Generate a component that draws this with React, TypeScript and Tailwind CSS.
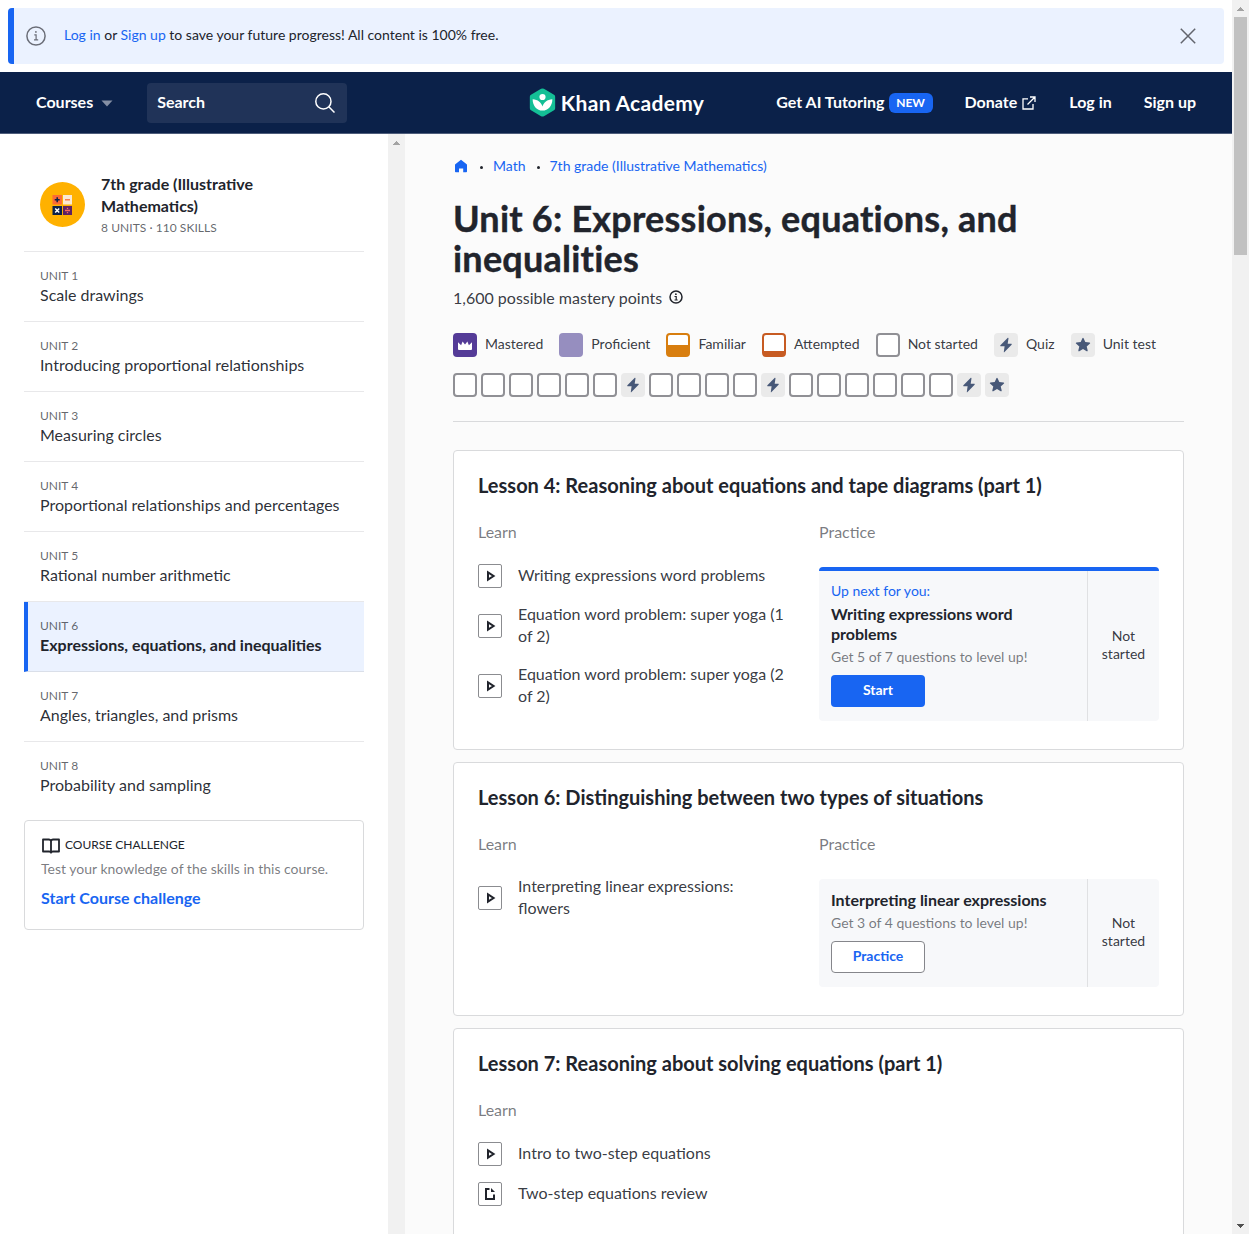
import React from "react";

const units = [
  "Scale drawings",
  "Introducing proportional relationships",
  "Measuring circles",
  "Proportional relationships and percentages",
  "Rational number arithmetic",
  "Expressions, equations, and inequalities",
  "Angles, triangles, and prisms",
  "Probability and sampling",
];

type Level = "mastered" | "proficient" | "familiar" | "attempted" | "none" | "quiz" | "test";

const legend: [Level, string][] = [
  ["mastered", "Mastered"],
  ["proficient", "Proficient"],
  ["familiar", "Familiar"],
  ["attempted", "Attempted"],
  ["none", "Not started"],
  ["quiz", "Quiz"],
  ["test", "Unit test"],
];

const progress: Level[] = [
  ...Array<Level>(6).fill("none"),
  "quiz",
  ...Array<Level>(4).fill("none"),
  "quiz",
  ...Array<Level>(6).fill("none"),
  "quiz",
  "test",
];

function Cell({ level }: { level: Level }) {
  switch (level) {
    case "mastered":
      return (
        <span className="flex size-6 items-center justify-center rounded bg-[#543b97]">
          <svg width="14" height="9" viewBox="0 0 14 9" fill="#fff">
            <path d="M0 1.2 3.1 4.2 4.6.4 7 3.6 9.4.4l1.5 3.8L14 1.2V8a.9.9 0 0 1-.9.9H.9A.9.9 0 0 1 0 8z" />
          </svg>
        </span>
      );
    case "proficient":
      return <span className="size-6 rounded bg-[#968ebf]" />;
    case "familiar":
      return <span className="size-6 rounded border-2 border-b-12 border-[#d87e0f] bg-white" />;
    case "attempted":
      return <span className="size-6 rounded border-2 border-b-6 border-[#c75b22] bg-white" />;
    case "none":
      return <span className="size-6 rounded border-2 border-[#909095] bg-white" />;
    case "quiz":
      return (
        <span className="flex size-6 items-center justify-center rounded bg-[#eaeaea]">
          <svg width="24" height="24" viewBox="0 0 24 24" fill="#475878">
            <path d="M13.8 4.8 6.4 12.3c-.3.4-.1 1 .4 1h3.8l-.8 5.6c0 .4.4.5.7.2l7.1-7.4c.3-.4.1-1-.4-1h-3.5l.8-5.5c0-.5-.4-.7-.7-.4z" />
          </svg>
        </span>
      );
    case "test":
      return (
        <span className="flex size-6 items-center justify-center rounded bg-[#eaeaea]">
          <svg width="24" height="24" viewBox="0 0 24 24" fill="#475878">
            <path d="M11.4 5.2a.65.65 0 0 1 1.2 0l1.7 3.9 4.3.4c.6.1.8.8.4 1.1l-3.3 2.8 1 4.2c.1.6-.5 1-1 .7L12 16.1l-3.7 2.2c-.5.3-1.1-.1-1-.7l1-4.2L5 10.6c-.4-.3-.2-1 .4-1.1l4.3-.4z" />
          </svg>
        </span>
      );
  }
}

type Practice = { upNext?: boolean; title: string; note: string; action: string };

const lessons: { title: string; learn: ["video" | "article", string][]; practice?: Practice }[] = [
  {
    title: "Lesson 4: Reasoning about equations and tape diagrams (part 1)",
    learn: [
      ["video", "Writing expressions word problems"],
      ["video", "Equation word problem: super yoga (1 of 2)"],
      ["video", "Equation word problem: super yoga (2 of 2)"],
    ],
    practice: {
      upNext: true,
      title: "Writing expressions word problems",
      note: "Get 5 of 7 questions to level up!",
      action: "Start",
    },
  },
  {
    title: "Lesson 6: Distinguishing between two types of situations",
    learn: [["video", "Interpreting linear expressions: flowers"]],
    practice: {
      title: "Interpreting linear expressions",
      note: "Get 3 of 4 questions to level up!",
      action: "Practice",
    },
  },
  {
    title: "Lesson 7: Reasoning about solving equations (part 1)",
    learn: [
      ["video", "Intro to two-step equations"],
      ["article", "Two-step equations review"],
    ],
  },
];

function ContentIcon({ kind }: { kind: "video" | "article" }) {
  return (
    <span className="flex size-6 shrink-0 items-center justify-center rounded-xs border border-[#8b8c90]">
      <svg width="22" height="22" viewBox="0 0 22 22" fill="none" stroke="#21242c" strokeWidth="2">
        {kind === "video" ? (
          <path d="M9 7.3v7.4L14.6 11z" />
        ) : (
          <>
            <path d="M10.5 6H7v10h8v-4.5" />
            <path d="M12 5l4 4h-4z" fill="#21242c" stroke="none" />
          </>
        )}
      </svg>
    </span>
  );
}

function PracticeCard({ practice }: { practice: Practice }) {
  return (
    <div
      className={
        practice.upNext
          ? "mt-[25px] flex overflow-hidden rounded border-t-4 border-[#1865f2] bg-[#f7f8fa]"
          : "mt-[25px] flex overflow-hidden rounded bg-[#f7f8fa]"
      }
    >
      <div className="flex-1 pt-[11px] pb-3.5 pl-3">
        {practice.upNext && <div className="mb-1 text-sm leading-[18px] text-[#1865f2]">Up next for you:</div>}
        <div className="w-[232px] leading-5 font-bold">{practice.title}</div>
        <div className="mt-1 text-sm leading-[18px] text-[#21242c]/60">{practice.note}</div>
        <button
          className={
            practice.upNext
              ? "mt-[9px] block h-8 w-[94px] rounded bg-[#1865f2] pb-0.5 text-sm font-bold text-white"
              : "mt-[9px] block h-8 w-[94px] rounded border border-[#85868b] bg-white pb-0.5 text-sm font-bold text-[#1865f2]"
          }
        >
          {practice.action}
        </button>
      </div>
      <div className="flex w-[72px] items-center justify-center border-l border-[#e0e1e3] pb-0.5 text-center text-sm leading-[18px] text-[#21242c]/90">
        Not
        <br />
        started
      </div>
    </div>
  );
}

function Arrow({ down, dark }: { down?: boolean; dark?: boolean }) {
  return (
    <svg width="17" height="17" viewBox="0 0 17 17" fill={dark ? "#505050" : "#a3a3a3"} shapeRendering="crispEdges">
      <path d={down ? "M5 7h7l-3.5 4z" : "M5 11h7L8.5 7z"} />
    </svg>
  );
}

function Logo() {
  return (
    <div className="flex items-center pl-px">
      <svg width="27" height="29" viewBox="0 0 27 30">
        <path
          d="M1.6 6.9 12 .9a3 3 0 0 1 3 0l10.4 6a2.4 2.4 0 0 1 1.2 2.1v12a2.4 2.4 0 0 1-1.2 2.1l-10.4 6a3 3 0 0 1-3 0l-10.4-6A2.4 2.4 0 0 1 .4 21V9a2.4 2.4 0 0 1 1.2-2.1z"
          fill="#14bf96"
        />
        <circle cx="13.5" cy="9.3" r="3.2" fill="#fff" />
        <path
          d="M3.3 11.6c5.4.3 8.9 3.3 10.2 7.6 1.3-4.3 4.8-7.3 10.2-7.6 0 6.900-4.300 11.800-10.200 11.800S3.300 18.500 3.300 11.600z"
          fill="#fff"
        />
      </svg>
      <span className="ml-[5px] text-[21px] leading-[30px] font-bold tracking-[0.3px]">Khan Academy</span>
    </div>
  );
}

export default function App() {
  return (
    <div className="flex h-[1234px] w-[1249px] overflow-hidden bg-white font-['Lato',sans-serif] text-base text-[#21242c]">
      <div className="flex w-[1232px] flex-col">
        <div className="m-2 flex h-14 shrink-0 items-center overflow-hidden rounded border-l-6 border-[#1865f2] bg-[#ebf2ff] pr-[26px] pl-3">
          <svg width="20" height="20" viewBox="0 0 20 20" fill="none" stroke="#6b6e78" strokeWidth="1.5">
            <circle cx="10" cy="10" r="9.1" />
            <path d="M8.3 8.8h1.8v5M8 13.9h4.2" strokeWidth="1.2" />
            <circle cx="9.9" cy="5.9" r=".9" fill="#6b6e78" stroke="none" />
          </svg>
          <p className="ml-[18px] pb-0.5 text-sm">
            <a className="text-[#1865f2]">Log in</a> or <a className="text-[#1865f2]">Sign up</a> to save your future
            progress! All content is 100% free.
          </p>
          <svg className="ml-auto" width="20" height="20" viewBox="0 0 20 20" stroke="#62656d" strokeWidth="1.5">
            <path d="M2.8 2.8l14.4 14.4M17.2 2.8 2.8 17.2" />
          </svg>
        </div>

        <header className="flex h-[62px] shrink-0 items-center border-b border-[#4e5d7b] bg-[#0b2149] px-9 font-bold text-white">
          <div className="flex flex-1 items-center">
            <span className="pb-0.5">Courses</span>
            <svg className="mt-0.5 ml-2" width="12" height="7" viewBox="0 0 12 7" fill="#858fa4">
              <path d="M.5.5h11L6 6.5z" />
            </svg>
            <div className="ml-[34px] flex h-10 w-[200px] items-center justify-between rounded bg-[#203358] pr-3 pl-2.5">
              <span className="pb-0.5">Search</span>
              <svg width="20" height="20" viewBox="0 0 20 20" fill="none" stroke="#fff" strokeWidth="1.5">
                <circle cx="8.4" cy="8.4" r="7.6" />
                <path d="M13.8 13.8l5.7 5.7" />
              </svg>
            </div>
          </div>
          <Logo />
          <nav className="flex flex-1 items-center justify-end gap-8">
            <span className="flex items-center">
              <span className="pb-0.5">Get AI Tutoring</span>
              <span className="ml-1 h-5 w-11 rounded-md bg-[#1865f2] text-center text-xs leading-5">NEW</span>
            </span>
            <span className="flex items-center">
              <span className="pb-0.5">Donate</span>
              <svg className="mr-px ml-[5px]" width="14" height="14" viewBox="0 0 14 14" fill="none" stroke="#fff" strokeWidth="1.3">
                <path d="M6 2.9H1v10.1h10V8M8 1h5v5M13 1 5.5 8.5" />
              </svg>
            </span>
            <span className="pb-0.5">Log in</span>
            <span className="pb-0.5">Sign up</span>
          </nav>
        </header>

        <div className="flex min-h-0 flex-1">
          <aside className="w-[388px] shrink-0 px-6">
            <div className="flex h-[118px] border-b border-[#e8e8ea] pt-[39px] pl-4">
              <svg className="mt-[9px]" width="45" height="45" viewBox="0 0 45 45">
                <circle cx="22.5" cy="22.5" r="22.5" fill="#ffb100" />
                <rect x="12.5" y="13" width="9.5" height="9.5" fill="#fb6b35" />
                <rect x="23" y="13" width="9" height="9.5" fill="#fbe8d3" />
                <rect x="12.5" y="24" width="9.5" height="9" fill="#0b2149" />
                <rect x="23" y="24" width="9" height="9" fill="#5d2163" />
                <path d="M17.2 15.3v5M14.7 17.8h5" stroke="#0b2149" strokeWidth="1.5" />
                <path d="M25 17.8h5" stroke="#fb6b35" strokeWidth="1.3" />
                <path d="M15.2 26.5l4 4M19.2 26.5l-4 4" stroke="#fff" strokeWidth="1.5" />
                <path d="M25 28.5h5M27.5 25.7v1.4M27.5 29.9v1.4" stroke="#fb6b60" strokeWidth="1.3" />
              </svg>
              <div className="ml-4 w-[200px]">
                <div className="leading-[22px] font-bold">7th grade (Illustrative Mathematics)</div>
                <div className="mt-[3px] text-xs leading-4 tracking-[0.05px] text-[#21242c]/70">
                  8 UNITS · 110 SKILLS
                </div>
              </div>
            </div>
            {units.map((name, i) => (
              <div
                key={name}
                className={
                  i === 5
                    ? "h-[70px] border-b border-l-4 border-b-[#dadfe9] border-l-[#1865f2] bg-[#ebf2ff] pt-4 pl-3"
                    : i === 7
                      ? "h-[78px] pt-4 pl-4"
                      : "h-[70px] border-b border-[#e8e8ea] pt-4 pl-4"
                }
              >
                <div className="text-xs leading-4 text-[#21242c]/70">UNIT {i + 1}</div>
                <div className={i === 5 ? "leading-[22px] font-bold" : "leading-[22px] text-[#21242c]/95"}>{name}</div>
              </div>
            ))}
            <div className="h-[110px] rounded border border-[#d9dadc] px-4 pt-[15px]">
              <div className="flex items-center text-xs leading-4">
                <svg
                  className="mt-0.5 mr-1"
                  width="20"
                  height="16"
                  viewBox="0 0 20 16"
                  fill="none"
                  stroke="#21242c"
                  strokeWidth="1.8"
                  strokeLinejoin="round"
                  strokeLinecap="round"
                >
                  <path d="M10 3.2C10 2.2 9 1.5 7.8 1.5H2V13.5h6c1.2 0 2 .4 2 1.2 0-.8.8-1.2 2-1.2h6V1.5h-5.8C11 1.5 10 2.2 10 3.2zV14.5" />
                </svg>
                COURSE CHALLENGE
              </div>
              <div className="mt-[5px] text-sm text-[#21242c]/60">Test your knowledge of the skills in this course.</div>
              <div className="mt-2 leading-[22px] font-bold text-[#1865f2]">Start Course challenge</div>
            </div>
          </aside>
          <div className="w-[17px] shrink-0 bg-[#f1f1f1]">
            <Arrow />
          </div>

          <main className="flex-1 bg-[#fbfbfb] px-12">
            <div className="mt-[22px] flex h-5 items-center text-sm text-[#1865f2]">
              <svg className="ml-px" width="14" height="14" viewBox="0 0 14 14" fill="#1865f2">
                <path d="M7 .7 12.7 5.3c.2.2.3.5.3.8V12.5a.8.8 0 0 1-.8.8H9.2V9.5H5v3.8H1.8a.8.8 0 0 1-.8-.8V6.1c0-.3.1-.6.3-.8z" />
              </svg>
              <span className="mt-0.5 mr-2.5 ml-3 size-[3px] rounded-full bg-[#21242c]" />
              Math
              <span className="mt-0.5 mr-2.5 ml-[11px] size-[3px] rounded-full bg-[#21242c]" />
              7th grade (Illustrative Mathematics)
            </div>
            <h1 className="mt-[22px] text-4xl leading-10 font-bold tracking-[0.22px] [font-variant-ligatures:common-ligatures] [-webkit-text-stroke:0.4px_#21242c]">
              Unit 6: Expressions, equations, and inequalities
            </h1>
            <div className="mt-[9px] flex h-[22px] items-center leading-[22px] text-[#21242c]/90">
              1,600 possible mastery points
              <svg className="mb-0.5 ml-[7px]" width="14" height="14" viewBox="0 0 14 14" fill="none" stroke="#21242c" strokeWidth="1.5">
                <circle cx="7" cy="7" r="6" />
                <path d="M5.5 6.5h1.7v3.3M5.5 10h3.2" strokeWidth="1.2" />
                <circle cx="6.9" cy="4.2" r=".9" fill="#21242c" stroke="none" />
              </svg>
            </div>
            <div className="mt-6 flex gap-[16.1px]">
              {legend.map(([level, label]) => (
                <div key={label} className="flex h-6 items-center gap-2 text-sm text-[#21242c]/90">
                  <Cell level={level} />
                  <span className="pb-0.5">{label}</span>
                </div>
              ))}
            </div>
            <div className="mt-4 flex gap-1">
              {progress.map((level, i) => (
                <Cell key={i} level={level} />
              ))}
            </div>
            <div className="mt-6 mb-7 h-px bg-[#d9dadc]" />
            <div className="flex flex-col gap-3">
              {lessons.map((lesson) => (
                <section key={lesson.title} className="rounded border border-[#d9dadc] bg-white px-6 pt-[22px] pb-7">
                  <h2 className="text-xl leading-6 font-bold">{lesson.title}</h2>
                  <div className="mt-[25px] flex">
                    <div className="w-[341px]">
                      <div className="leading-5 text-[#21242c]/60">Learn</div>
                      <div className="mt-3.5">
                        {lesson.learn.map(([kind, text]) => (
                          <div key={text} className="flex min-h-10 items-center text-[#21242c]/90">
                            <ContentIcon kind={kind} />
                            <span className="ml-4 w-[270px] pt-[7px] pb-[9px] leading-[22px]">{text}</span>
                          </div>
                        ))}
                      </div>
                    </div>
                    {lesson.practice && (
                      <div className="w-[340px]">
                        <div className="leading-5 text-[#21242c]/60">Practice</div>
                        <PracticeCard practice={lesson.practice} />
                      </div>
                    )}
                  </div>
                  {!lesson.practice && <div className="h-20" />}
                </section>
              ))}
            </div>
          </main>
        </div>
      </div>
      <div className="flex w-[17px] flex-col items-center bg-[#f1f1f1]">
        <Arrow />
        <div className="h-[238px] w-[13px] bg-[#c1c1c1]" />
        <div className="mt-auto h-[17px]">
          <Arrow down dark />
        </div>
      </div>
    </div>
  );
}
